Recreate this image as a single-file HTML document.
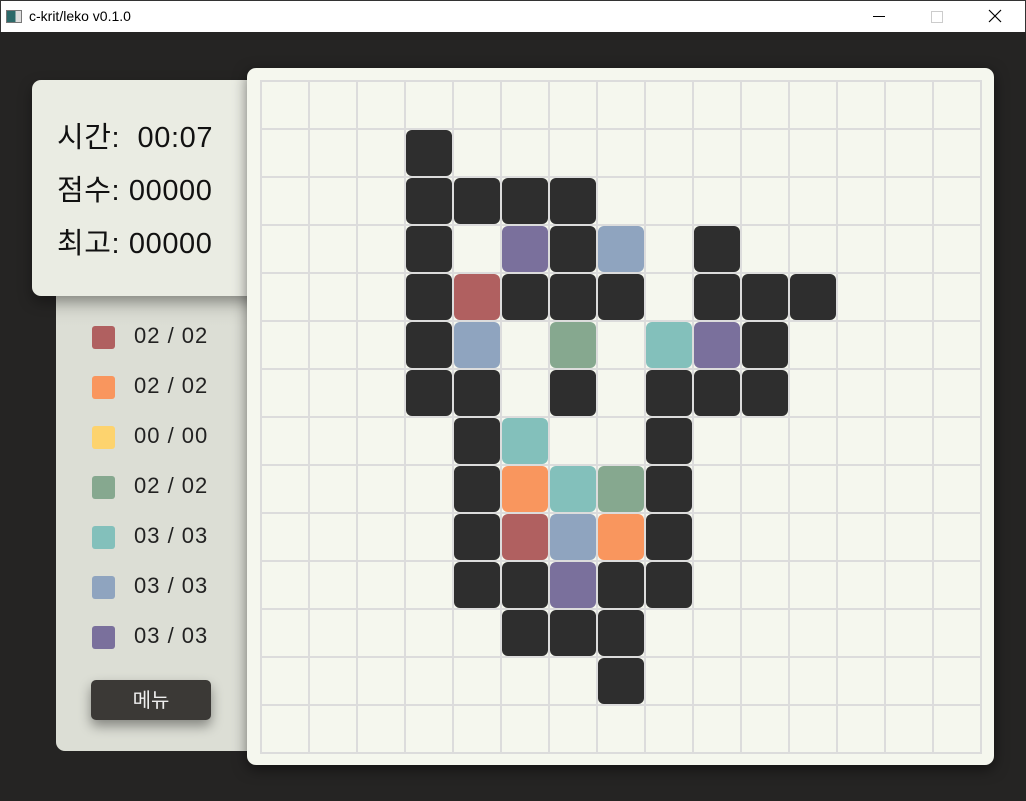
<!DOCTYPE html>
<html><head><meta charset="utf-8"><style>
*{margin:0;padding:0;box-sizing:border-box}
body{width:1026px;height:801px;background:#252423;position:relative;overflow:hidden;font-family:"Liberation Sans","Noto Sans CJK KR",sans-serif}
.title{position:absolute;left:0;top:0;width:1026px;height:32px;background:#fff;border:1px solid #333;border-bottom:none}
.title span{position:absolute;left:28px;top:7px;font-size:14px;color:#000}
.ico{position:absolute;left:5px;top:9px;width:16px;height:13px;border:1px solid #777;background:linear-gradient(90deg,#2d6a6a 0 60%,#ddd 60%)}
.top{position:absolute;left:32px;top:80px;width:230px;height:216px;background:#eaece3;border-radius:9px;box-shadow:0 6px 14px rgba(0,0,0,.35)}
.top div{position:absolute;left:25px;font-size:29px;color:#111;font-family:"Liberation Sans","Noto Sans CJK KR",sans-serif;white-space:nowrap;letter-spacing:.6px}
.low{position:absolute;left:56px;top:296px;width:200px;height:455px;background:linear-gradient(#cfd1c8,#dcded5 30px);border-radius:0 0 0 9px}
.row{position:absolute;left:36px;font-size:22px;color:#222;font-family:"Liberation Sans","Noto Sans CJK KR",sans-serif}
.row i{position:absolute;left:0;top:3px;width:23px;height:23px;border-radius:3px}
.row span{position:absolute;left:42px;top:0px;white-space:nowrap;letter-spacing:1px}
.btn{position:absolute;left:35px;top:384px;width:120px;height:40px;background:#3b3936;border-radius:5px;color:#eee;font-size:20px;text-align:center;line-height:38px;box-shadow:0 6px 12px rgba(0,0,0,.4);font-family:"Noto Sans CJK KR",sans-serif}
.board{position:absolute;left:247px;top:68px;width:747px;height:697px;background:#f5f7ee;border-radius:9px;box-shadow:0 4px 14px rgba(0,0,0,.5)}
.grid{position:absolute;left:260px;top:80px;width:722px;height:674px;border:2px solid #dcdcdc}
.v{position:absolute;top:80px;width:2px;height:674px;background:#dcdcdc}
.h{position:absolute;left:260px;height:2px;width:722px;background:#dcdcdc}
.b{position:absolute;width:46px;height:46px;border-radius:6px}
</style></head><body>
<div class="title"><div class="ico"></div><span>c-krit/leko v0.1.0</span>
<div style="position:absolute;left:872px;top:15px;width:12px;height:1px;background:#000"></div>
<div style="position:absolute;left:930px;top:10px;width:12px;height:12px;border:1px solid #ccc"></div>
<svg style="position:absolute;left:987px;top:8px" width="14" height="14"><path d="M1 1L13 13M13 1L1 13" stroke="#000" stroke-width="1.2"/></svg>
</div>
<div class="low">
<div class="row" style="top:27px"><i style="background:#b06060"></i><span>02 / 02</span></div>
<div class="row" style="top:77px"><i style="background:#f9965e"></i><span>02 / 02</span></div>
<div class="row" style="top:127px"><i style="background:#fdd36e"></i><span>00 / 00</span></div>
<div class="row" style="top:177px"><i style="background:#86a88f"></i><span>02 / 02</span></div>
<div class="row" style="top:227px"><i style="background:#83c0bb"></i><span>03 / 03</span></div>
<div class="row" style="top:277px"><i style="background:#8fa4bf"></i><span>03 / 03</span></div>
<div class="row" style="top:327px"><i style="background:#7a709c"></i><span>03 / 03</span></div>
<div class="btn">메뉴</div>
</div>
<div class="top">
<div style="top:34px">시간:&nbsp; 00:07</div>
<div style="top:87px">점수: 00000</div>
<div style="top:140px">최고: 00000</div>
</div>
<div class="board"></div>
<div class="grid"></div>
<div id="g"></div>
<script>
var g=document.getElementById('g'),h='';
for(var i=1;i<15;i++)h+='<div class="v" style="left:'+(260+48*i)+'px"></div>';
for(var j=1;j<14;j++)h+='<div class="h" style="top:'+(80+48*j)+'px"></div>';
var K='#2e2e2e',R='#b06060',O='#f9965e',G='#86a88f',T='#83c0bb',B='#8fa4bf',P='#7a709c';
var L=[[1,3,K],[2,3,K],[2,4,K],[2,5,K],[2,6,K],
[3,3,K],[3,5,P],[3,6,K],[3,7,B],[3,9,K],
[4,3,K],[4,4,R],[4,5,K],[4,6,K],[4,7,K],[4,9,K],[4,10,K],[4,11,K],
[5,3,K],[5,4,B],[5,6,G],[5,8,T],[5,9,P],[5,10,K],
[6,3,K],[6,4,K],[6,6,K],[6,8,K],[6,9,K],[6,10,K],
[7,4,K],[7,5,T],[7,8,K],
[8,4,K],[8,5,O],[8,6,T],[8,7,G],[8,8,K],
[9,4,K],[9,5,R],[9,6,B],[9,7,O],[9,8,K],
[10,4,K],[10,5,K],[10,6,P],[10,7,K],[10,8,K],
[11,5,K],[11,6,K],[11,7,K],[12,7,K]];
L.forEach(function(a){h+='<div class="b" style="left:'+(262+48*a[1])+'px;top:'+(82+48*a[0])+'px;background:'+a[2]+'"></div>'});
g.innerHTML=h;
</script>
</body></html>
